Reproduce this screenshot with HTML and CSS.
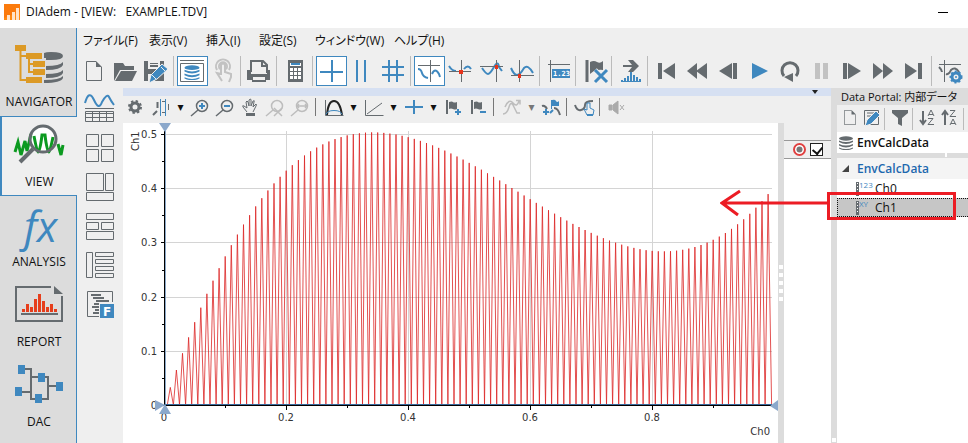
FILE: index.html
```html
<!DOCTYPE html>
<html lang="ja">
<head>
<meta charset="utf-8">
<title>DIAdem - [VIEW: EXAMPLE.TDV]</title>
<link rel="stylesheet" href="styles.css">
</head>
<body>
<svg class="defs" aria-hidden="true">
  <symbol id="page" viewBox="0 0 16 20"><path class="g" d="M10 .5H.5v19h15V6"/><path class="gf" d="M10 0v6h6z"/></symbol>
  <symbol id="lens" viewBox="0 0 25 27"><circle cx="14" cy="10" r="5.500"/><path d="M10 14l-7 6"/></symbol>
  <symbol id="flag" viewBox="0 0 25 27"><path class="g2" d="M6 4v14"/><path class="gf" d="M8 6q3-1 4 0t4 0v7q-2 1-4 0t-4 0z"/></symbol>
  <symbol id="db" viewBox="0 0 14 14"><ellipse cx="7" cy="2.500" rx="7" ry="2.200"/><path d="M0 4.500q7 3 14 0v1.500q-7 4-14 0zM0 8q7 3 14 0v1.500q-7 4-14 0zM0 11.500q7 3 14 0v1q-7 3.500-14 0z"/></symbol>
</svg>
<header class="title">
  <svg width="16" height="16" aria-hidden="true"><rect width="16" height="16" fill="#ff8a12"/><path d="M0 0h16v8L0 14z" fill="#fb7a0c"/><path d="M3 11h3v5H3zM8 8h3v8H8zM12 4h3v12h-3z" fill="#ffe3c8"/></svg>
  <h1>DIAdem - [VIEW: &nbsp; EXAMPLE.TDV]</h1>
  <button class="minimize" aria-label="最小化"></button>
</header>
<div class="app">
  <nav class="modules">
    <a href="#navigator" class="module">
      <svg width="76" height="56"><g fill="#dc9a26"><path d="M15 9h11v6H15zM26 17h16v6H26zM33 25h12v6H33zM33 33h12v6H33zM26 41h16v6H26z"/></g><path d="M20.500 14v30H27M20 20h7M29 22v14h5M29 28h5" fill="none" stroke="#dc9a26" stroke-width="2"/><path d="M44 17q2-1 7-1 12 0 12 4t-12 4h-5v-2h-2z" fill="#656b6f"/><path d="M46 30q14 0 17-4v3q-2 5-17 5zM46 38q14 0 17-4v3q-2 5-17 5zM44 44q16 0 19-4v2q-2 5-19 5z" fill="#656b6f"/></svg>
      <span>NAVIGATOR</span></a>
    <a href="#view" class="module active">
      <svg width="76" height="56"><circle cx="43" cy="23" r="13" fill="#fff"/><path d="M15 36l3-10 3 13 4-14 2 10 4-17M34 20q3 16 4 16 2 0 4-17h3q2 17 4 17 1 0 4-15M58 28l3 11 2-10" fill="none" stroke="#0c9a20" stroke-width="3"/><circle cx="43" cy="23" r="13" fill="none" stroke="#656b6f" stroke-width="3"/><path d="M33 33L20 46" stroke="#656b6f" stroke-width="4"/></svg>
      <span>VIEW</span></a>
    <a href="#analysis" class="module">
      <svg width="76" height="56"><text x="24" y="46" class="fx">fx</text></svg>
      <span>ANALYSIS</span></a>
    <a href="#report" class="module">
      <svg width="76" height="56"><path d="M51 11H16v34h46V20" fill="none" stroke="#656b6f" stroke-width="2"/><path d="M54 10l9 8h-9z" fill="#656b6f"/><path d="M21 38h37" stroke="#656b6f" stroke-width="2" fill="none"/><path d="M22 33h3v3h-3zM26 28h3v8h-3zM30 31h3v5h-3zM34 23h3v13h-3zM38 18h3v18h-3zM42 25h3v11h-3zM46 31h3v5h-3zM50 28h3v8h-3zM54 33h3v3h-3z" fill="#e63e1c"/></svg>
      <span>REPORT</span></a>
    <a href="#dac" class="module">
      <svg width="76" height="56"><path d="M24 13h7v30h5M20 36h11M31 21h17v22h-7M48 30h9" fill="none" stroke="#656b6f" stroke-width="2"/><path d="M18 9h7v9h-7zM38 17h7v9h-7zM56 26h7v9h-7zM15 31h7v9h-7zM35 38h7v9h-7z" fill="#3f88bf"/></svg>
      <span>DAC</span></a>
  </nav>
  <div class="main">
    <nav class="menu">
      <button>ファイル(F)</button><button>表示(V)</button><button>挿入(I)</button><button>設定(S)</button><button>ウィンドウ(W)</button><button>ヘルプ(H)</button>
    </nav>
    <div class="toolbar" role="toolbar">
      <button aria-label="新規"><svg><use href="#page" x="7" y="5" width="16" height="20"/></svg></button>
      <button aria-label="開く"><svg><path class="gf" d="M4 7h9l2 3h9v4H10L4 25z"/><path class="gf" d="M11 15h16l-5 10H5z"/></svg></button>
      <button aria-label="保存"><svg><path class="gf" d="M3 5h20v20H3z"/><path d="M7 5h12v8H7z" fill="#efefef"/><path class="gf" d="M9 7h8v1H9zM9 9h8v2H9z"/><path d="M7 18h7v7H7z" fill="#efefef"/><path d="M21 8l6 5-11 10-8 4 2-8z" fill="#3f88bf" stroke="#efefef"/><path d="M20 11l4 4M11 19l4 4" stroke="#efefef"/></svg></button>
      <i class="sep"></i>
      <button class="on" aria-label="データポータル"><svg><path class="g" d="M3 4.500h24M3.500 7.500h23v18h-23z"/><use href="#db" x="7" y="9" width="16" height="15" fill="#3f88bf"/></svg></button>
      <button aria-label="タッチ" disabled><svg><path d="M9 14a7 7 0 1 1 12 0M12 13a4 4 0 1 1 6 0M13 19V9q2-3 4 0v7l6 2v3l-2 5M13 18l-4-1 5 8" fill="none" stroke="#c2c2c2" stroke-width="2"/></svg></button>
      <i class="sep"></i>
      <button aria-label="印刷"><svg><path class="g2" d="M7 16V5h12l4 4v8M18 5v5h5"/><path class="gf" d="M3 14h4v4h16v-4h3v10h-4v2H8v-2H3z"/><path d="M9 21h12v3H9z" fill="#efefef"/></svg></button>
      <i class="sep"></i>
      <button aria-label="電卓"><svg><path class="gf" d="M8 4h15v22H8z"/><path d="M10 7h11v3H10zM10 12h3v3h-3zM14 12h3v3h-3zM18 12h3v3h-3zM10 16h3v3h-3zM14 16h3v3h-3zM18 16h3v3h-3zM10 20h3v3h-3zM14 20h3v3h-3zM18 20h3v3h-3z" fill="#fff"/><path d="M11 7h9v2h-9z" fill="#3f88bf"/></svg></button>
      <i class="sep"></i>
      <button class="on" aria-label="十字カーソル"><svg><path class="b2" d="M16 4v22M4 16h23"/></svg></button>
      <button aria-label="帯カーソル"><svg><path class="b2" d="M10 4v22M18 4v22"/></svg></button>
      <button aria-label="枠カーソル"><svg><path class="b2" d="M11 4v22M19 4v22M4 11h22M4 19h22"/></svg></button>
      <i class="sep"></i>
      <button class="on" aria-label="フリー"><svg><path class="b2" d="M4 13q3 0 4 4t6 5M18 18q3-7 7 0l1 3"/><path class="g" d="M16.500 4v22M4 9.500h22"/></svg></button>
      <button aria-label="曲線"><svg><path class="b2" d="M4 10q3 5 7 5M19 13q4-5 7 0"/><path class="g" d="M16.500 4v22M4 15.500h22"/><path class="r" d="M14 14h4v4h-4z"/></svg></button>
      <button aria-label="ピーク"><svg><path class="b2" d="M6 12q4 6 6 6t6-7 5 0l3 4"/><path class="g" d="M20.500 4v22M4 10.500h23"/><path class="r" d="M19 9h3v4h-3z"/></svg></button>
      <button aria-label="谷"><svg><path class="b2" d="M4 12q3 7 6 7t7-7q4-4 9 5"/><path class="g" d="M12.500 4v22M4 19.500h23"/><path class="r" d="M11 18h3v4h-3z"/></svg></button>
      <i class="sep"></i>
      <button aria-label="座標"><svg><path class="g" d="M7.500 4v22M5 8.500h22"/><path d="M9 13h18v9H9z" fill="#3f88bf"/><text x="10" y="20" class="digits">1.23</text></svg></button>
      <i class="sep"></i>
      <button aria-label="フラグ削除"><svg><path d="M8 4v22" stroke="#656b6f" stroke-width="3"/><path class="gf" d="M11 6q4-2 7 0t6-1v9q-7-1-13 4z"/><path d="M16 14l12 12M28 14L16 26" stroke="#efefef" stroke-width="5"/><path d="M16 14l12 12M28 14L16 26" stroke="#3f88bf" stroke-width="3"/></svg></button>
      <i class="sep"></i>
      <button aria-label="転送"><svg><path class="gf" d="M8 9h9l-4-5h5l6 6-6 6h-5l4-5H8z"/><path d="M7 24v2M10 22v4M13 20v6M16 16v10M19 19v7M22 21v5M25 23v3" class="b2"/><path d="M6 25.500h20" stroke="#3f88bf"/></svg></button>
      <i class="sep"></i>
      <button aria-label="先頭"><svg><path class="gf" d="M7 7h4v16H7zM24 7v16l-12-8z"/></svg></button>
      <button aria-label="早戻し"><svg><path class="gf" d="M15 7v16L5 15zM25 7v16l-11-8z"/></svg></button>
      <button aria-label="コマ戻し"><svg><path class="gf" d="M19 7v16L6 15zM20 7h4v16h-4z"/></svg></button>
      <button aria-label="再生"><svg><path d="M8 7l16 8-16 8z" fill="#3f88bf"/></svg></button>
      <button aria-label="繰り返し"><svg><path d="M9 20a8 8 0 1 1 12 0" fill="none" stroke="#656b6f" stroke-width="3"/><path class="gf" d="M9 21l9-4v9z"/></svg></button>
      <button aria-label="一時停止" disabled><svg><path d="M9 7h5v16H9zM17 7h5v16h-5z" fill="#c2c2c2"/></svg></button>
      <button aria-label="コマ送り"><svg><path class="gf" d="M6 7h4v16H6zM11 7l13 8-13 8z"/></svg></button>
      <button aria-label="早送り"><svg><path class="gf" d="M5 7l10 8-10 8zM15 7l10 8-10 8z"/></svg></button>
      <button aria-label="末尾"><svg><path class="gf" d="M6 7l12 8-12 8zM19 7h4v16h-4z"/></svg></button>
      <i class="sep"></i>
      <button aria-label="設定"><svg><path class="g" d="M9.500 4v22M4 8.500h22"/><path class="g2" d="M4 11q3 3 3 5M11 18q3 1 5-4 4-4 8 2"/><circle cx="21" cy="21" r="4" fill="#efefef" stroke="#3f88bf" stroke-width="3"/><circle cx="21" cy="21" r="5.500" fill="none" stroke="#3f88bf" stroke-width="2" stroke-dasharray="2 2"/><circle cx="21" cy="21" r="1" fill="#3f88bf"/></svg></button>
    </div>
    <div class="workspace">
      <div class="layouts">
        <button aria-label="曲線と表"><svg><path class="g" d="M1 15.500h29"/><path class="b2" d="M1 10q4-14 9-3t8 2q5-9 7-5t5 8"/><path class="g" d="M1.500 18.500h28v10h-28zM1 20.500h28M1 24.500h28M8.500 19v10M15.500 19v10M22.500 19v10"/></svg></button>
        <button aria-label="4分割"><svg><path class="g" d="M2.500 2.500h12v12h-12zM17.500 2.500h12v12h-12zM2.500 17.500h12v12h-12zM17.500 17.500h12v12h-12z"/></svg></button>
        <button aria-label="3分割"><svg><path class="g" d="M2.500 2.500h17v17h-17zM21.500 2.500h8v17h-8zM2.500 21.500h27v8h-27z"/></svg></button>
        <button aria-label="段組み"><svg><path class="g" d="M2.500 3.500h27v6h-27zM2.500 12.500h12v7h-12zM17.500 12.500h12v7h-12zM2.500 21.500h27v8h-27z"/></svg></button>
        <button aria-label="左列"><svg><path class="g" d="M2.500 3.500h6v25h-6zM11.500 3.500h18v4h-18zM11.500 10.500h18v4h-18zM11.500 17.500h18v4h-18zM11.500 24.500h18v4h-18z"/></svg></button>
        <button aria-label="フォーム"><svg><path class="g" d="M28.500 14V3.500h-25v25H15"/><path class="g2" d="M7 7h10M9 10h11M12 13h13M10 16h5M8 19h7M11 22h4M9 25h6"/><path d="M16 16h14v14H16z" fill="#3f88bf"/><text x="19" y="28" class="letter">F</text></svg></button>
      </div>
      <main class="document">
        <div class="doctitle"><svg width="6" height="4" aria-hidden="true"><path d="M0 0h6L3 4z" fill="#222"/></svg></div>
        <div class="tools" role="toolbar">
          <button aria-label="設定"><svg><circle cx="12" cy="11" r="4" fill="none" stroke="#656b6f" stroke-width="3"/><circle cx="12" cy="11" r="6" fill="none" stroke="#656b6f" stroke-width="2" stroke-dasharray="2.400 2.300"/></svg></button>
          <button aria-label="ズーム枠"><svg><path class="g2" d="M5 19l4-4M9.500 12V6"/><path class="b" d="M12.500 3v17M17.500 3v17"/><path d="M14 5.500h3M14 16.500h3M20.500 8v6" class="g"/></svg></button><button class="arrow" aria-label="選択肢">▾</button>
          <button aria-label="拡大"><svg class="g thin"><use href="#lens" width="25" height="27"/><path class="b2" d="M14 7v6M11 10h6"/></svg></button>
          <button aria-label="縮小"><svg class="g thin"><use href="#lens" width="25" height="27"/><path class="b2" d="M11 10h6"/></svg></button>
          <button aria-label="移動"><svg><path class="g" d="M9 16l-4-5q-1-2 1-1l3 2-1-6q1-2 2 0l1 4V4q2-2 2 0v6l2-5q2-1 1 1l-1 5 3-3q1 0 0 2l-3 6"/><path class="gf" d="M8 17h9v3H8z"/></svg></button>
          <button aria-label="ズーム解除" disabled><svg class="l"><use href="#lens" width="25" height="27"/><path d="M11 12l8 8M19 12l-8 8"/></svg></button>
          <button aria-label="前のズーム" disabled><svg class="l"><use href="#lens" width="25" height="27"/><path d="M9 10h10M11 8l-2 2 2 2M17 8l2 2-2 2"/></svg></button>
          <i class="sep"></i>
          <button aria-label="曲線"><svg><path class="g" d="M4.500 4v15.500h18"/><path d="M6 19q1-14 7-14t8 14" fill="none" stroke="#222" stroke-width="2"/><path class="b" d="M5 18.500q1-4 8-4t8 4"/></svg></button><button class="arrow" aria-label="選択肢">▾</button>
          <button aria-label="軸"><svg><path class="g" d="M4.500 4v15.500h18M6 18L21 7"/></svg></button><button class="arrow" aria-label="選択肢">▾</button>
          <button aria-label="カーソル"><svg><path class="b2" d="M13 4v14M4 11h18"/></svg></button><button class="arrow" aria-label="選択肢">▾</button>
          <button aria-label="フラグ追加"><svg><use href="#flag" width="25" height="27"/><path class="b2" d="M17 13v6M14 16h6"/></svg></button>
          <button aria-label="フラグ削除"><svg><use href="#flag" width="25" height="27"/><path class="b2" d="M14 16h6"/></svg></button>
          <i class="sep"></i>
          <button aria-label="曲線操作" disabled><svg class="l"><path d="M4 18q4 0 6-7t5 0l3 6h3M6 11q4-9 8-4t6-2M17 4.500h4v4"/></svg></button><button class="arrow dim" aria-label="選択肢">▾</button>
          <button aria-label="データ点"><svg><path d="M12.500 4v9" class="b"/><path d="M13 4q3-1 4 1t3 0v5h-7z" fill="#3f88bf"/><path class="g2" d="M3 10q3-1 5 3M15 12q4 0 6 7"/><path class="b2" d="M7 13v6M4 16h6M11 17l3-3"/></svg></button>
          <i class="sep"></i>
          <button aria-label="選択"><svg><path class="g2" d="M3 9q2 6 6 5t4-5 8-4"/><path d="M14 17l-2-4 3 1V7h3v5l4 2-1 5h-6z" fill="#efefef" stroke="#3f88bf"/><path class="b2" d="M15 19h6"/></svg></button>
          <i class="sep"></i>
          <button aria-label="音声" disabled><svg><path d="M4 9h3v5H4zM8 9l5-4v13l-5-4zM15 9l4 5M19 9l-4 5" fill="#aaa" stroke="#aaa"/></svg></button>
        </div>
        <div class="panes">
          <section class="plot">
            <svg class="chart" viewBox="0 0 655 320" role="img" aria-label="Ch1 / Ch0">
              <path d="M163.500 8v274M285.500 8v274M407.500 8v274M529.500 8v274M42 11.500h607M42 65.500h607M42 119.500h607M42 174.500h607M42 228.500h607" stroke="#d4d4d4" fill="none"/>
              <path id="signal" fill="none" stroke="#dc2424" stroke-width="0.800"/>
              <path d="M41.500 8v275" stroke="#000"/><path d="M42.500 8v273" stroke="#8aa8c8"/>
              <path d="M41 282.500h608" stroke="#000"/><path d="M42 281.500h607" stroke="#38689a"/>
              <path d="M38 11.500h4M38 65.500h4M38 119.500h4M38 174.500h4M38 228.500h4M38 282.500h4M39 38.500h3M39 92.500h3M39 147.500h3M39 201.500h3M39 255.500h3M41.500 283v4M163.500 283v4M285.500 283v4M407.500 283v4M529.500 283v4M102.500 283v2M224.500 283v2M346.500 283v2M468.500 283v2M590.500 283v2" stroke="#000"/>
              <g class="ticks">
                <g text-anchor="end"><text x="34" y="15">0.5</text><text x="34" y="69">0.4</text><text x="34" y="123">0.3</text><text x="34" y="178">0.2</text><text x="34" y="232">0.1</text><text x="34" y="286">0</text></g>
                <g text-anchor="middle"><text x="41" y="298">0</text><text x="163" y="298">0.2</text><text x="285" y="298">0.4</text><text x="407" y="298">0.6</text><text x="529" y="298">0.8</text></g>
                <text x="647" y="312" text-anchor="end">Ch0</text>
                <text transform="translate(16 28) rotate(-90)">Ch1</text>
              </g>
              <path d="M36 0h12l-6 9zM32 277v11l10-6zM36 291h12l-6-10zM655 277v11l-8-5z" fill="#8ba8cb"/>
            </svg>
          </section>
          <div class="splitter grip"><i></i><i></i><i></i><i></i><i></i></div>
          <aside class="legend">
            <label class="entry"><svg width="13" height="13"><circle cx="6.500" cy="6.500" r="5.500" fill="#fff" stroke="#e04040" stroke-width="2"/><circle cx="6.500" cy="6.500" r="3" fill="#777"/></svg><input type="checkbox" checked aria-label="Ch1"></label>
          </aside>
        </div>
      </main>
      <div class="splitter end"><i></i></div>
      <aside class="portal">
        <h2>Data Portal: 内部データ</h2>
        <div class="portaltools">
          <button aria-label="新規"><svg><use href="#page" x="7" y="5" width="12" height="15"/></svg></button>
          <button aria-label="保存"><svg><path class="g" d="M4.500 5.500h14v14h-14zM7 8h9M7 11h9"/><path d="M16 6l4 4-9 9-6 2 2-6z" fill="#3f88bf" stroke="#efefef"/></svg></button>
          <i class="sep"></i>
          <button aria-label="フィルタ"><svg><path class="gf" d="M4 5h16v3l-6 5v8l-4-2v-6L4 8z"/></svg></button>
          <i class="sep"></i>
          <button aria-label="昇順"><svg><path class="g2" d="M7 6v12M4 15l3 4 3-4"/><path class="g" d="M12 11l3-6 3 6M13 9.500h4M12 13.500h5l-5 6h6"/></svg></button>
          <button aria-label="降順"><svg><path class="g2" d="M6 7v13M3 10l3-4 3 4"/><path class="g" d="M11 5.500h5l-5 6h6M11 20l3-6 3 6M12 18.500h4"/></svg></button>
          <i class="sep"></i>
        </div>
        <div class="source"><svg width="14" height="14"><use href="#db" width="14" height="14" fill="#656b6f"/></svg>EnvCalcData</div>
        <div class="divider"><i></i></div>
        <div class="group"><svg width="7" height="7"><path d="M7 0v7H0z" fill="#444"/></svg>EnvCalcData</div>
        <ul class="channels">
          <li><svg><path d="M1.500 2v14" stroke="#656b6f" stroke-width="3"/><path d="M1.500 3v12" stroke="#fff" stroke-dasharray="1 2"/><text x="3" y="8">123</text></svg>Ch0</li>
          <li class="selected"><svg><path d="M1.500 2v14" stroke="#656b6f" stroke-width="3"/><path d="M1.500 3v12" stroke="#fff" stroke-dasharray="1 2"/><text x="3" y="8">XY</text></svg>Ch1
            <svg class="callout" width="240" height="34" aria-hidden="true"><path d="M108.500 4.500h126v25h-126zM109 14H2M20 2L2 14l16 12"/></svg></li>
        </ul>
      </aside>
    </div>
  </div>
</div>
<script src="chart.js"></script>
</body>
</html>
```
FILE: styles.css
```css
* { box-sizing: border-box; }
html, body { height: 100%; margin: 0; }
body {
  display: flex; flex-direction: column; overflow: hidden;
  background: #efefef; color: #111;
  font: 12px/16px "Open Sans", "Noto Sans CJK JP", sans-serif;
}
button { appearance: none; border: 0; margin: 0; padding: 0; background: none; color: inherit; font: inherit; }
svg { display: block; flex: none; }
.defs { position: absolute; width: 0; height: 0; }
h1, h2 { margin: 0; font-weight: 400; }
.g, .g2, .b, .b2, .l { fill: none; stroke: #656b6f; }
.g2, .b2 { stroke-width: 2; }
.b, .b2 { stroke: #3f88bf; }
.l { stroke: #bdbdbd; stroke-width: 1.5; }
.thin { stroke-width: 1.5; }
.gf { fill: #656b6f; stroke: none; }
.r { fill: #e8341c; }

.title { display: flex; flex: none; align-items: center; height: 28px; padding: 0 20px 4px 4px; background: #fff; }
.title h1 { flex: 1; margin-left: 6px; font-size: 12px; line-height: 16px; }
.minimize { width: 10px; height: 1px; background: #000; }

.app { display: flex; flex: 1; min-height: 0; }
.modules { flex: none; width: 77px; background: #dcdcdc; border-right: 1px solid #3f88bf; }
.module { display: block; height: 80px; color: #111; text-align: center; text-decoration: none; line-height: 20px; }
.module:first-child { height: 88px; padding-top: 8px; }
.module span { display: block; padding-left: 2px; }
.module.active { margin-right: -1px; background: #efefef; box-shadow: inset 2px 0 #3f88bf, inset 0 1px #3f88bf, inset 0 -1px #3f88bf; }
.fx { font: italic 42px "Open Sans", sans-serif; fill: #3f88bf; }
.module svg { overflow: visible; }

.main { display: flex; flex: 1; flex-direction: column; min-width: 0; }
.menu { display: grid; grid-template-columns: 66px 57px 53px 56px 79px auto; justify-content: start; align-items: center; height: 26px; padding-left: 6px; }
.menu button { text-align: left; white-space: nowrap; font-feature-settings: "palt"; }
.toolbar { display: flex; align-items: center; height: 34px; padding: 0 2px; }
.toolbar button, .toolbar svg { width: 31px; height: 30px; flex: none; }
.toolbar .on { background: #fff; box-shadow: inset 0 0 0 1px #3f88bf; }
.sep { flex: none; width: 5px; height: 30px; background: linear-gradient(#bbb, #bbb) 1px 0 / 1px 100% no-repeat; }
.digits { font: bold 7px "DejaVu Sans Mono", monospace; fill: #fff; }
.letter { font: bold 12px "DejaVu Sans", sans-serif; fill: #fff; }

.workspace { display: flex; flex: 1; min-height: 0; }
.layouts { flex: none; width: 46px; padding-top: 5px; }
.layouts button, .layouts svg { display: block; width: 32px; height: 32px; }
.layouts button { margin: 0 0 7px 7px; }

.document { display: flex; flex: 1; flex-direction: column; min-width: 0; }
.doctitle { display: flex; justify-content: flex-end; height: 8px; padding: 2px 13px 0 0; background: #d6e0f2; }
.tools { display: flex; height: 27px; }
.tools button, .tools svg { flex: none; width: 25px; height: 27px; }
.tools .arrow { width: 15px; height: 22px; font: 12px/22px "DejaVu Sans", sans-serif; text-align: center; }
.tools .dim { color: #777; }
.tools .sep { width: 8px; height: 18px; margin-top: 2px; background-image: linear-gradient(#777, #777); background-position-x: 2px; }
.panes { display: flex; flex: 1; min-height: 0; }
.plot { flex: 1; min-width: 0; background: #fff; }
.chart { width: 100%; height: auto; }
.ticks { font: 10px "DejaVu Sans", sans-serif; fill: #333; }
.splitter { display: flex; flex: none; flex-direction: column; align-items: center; justify-content: center; gap: 4px; width: 6px; background: #dcdcdc; }
.splitter i { width: 4px; height: 4px; background: #fff; }
.splitter.end { justify-content: flex-end; padding-bottom: 1px; }
.legend { flex: none; width: 47px; padding-top: 17px; background: linear-gradient(#efefef 36px, #fff 36px); }
.entry { display: flex; align-items: center; gap: 4px; height: 19px; padding-left: 9px; border: solid #999; border-width: 1px 0; }
.entry input { position: relative; appearance: none; width: 13px; height: 13px; margin: 0; border: 1px solid #222; background: #fff; }
.entry input:checked::after { content: ""; position: absolute; left: 3px; top: 1px; width: 5px; height: 7px; border: solid #111; border-width: 0 2px 2px 0; transform: rotate(40deg); }

.portal { display: flex; flex: none; flex-direction: column; width: 131px; background: #fff; }
.portal h2 { height: 17px; padding-left: 4px; background: #dcdcdc; font-size: 11px; line-height: 17px; white-space: nowrap; font-feature-settings: "palt"; }
.portaltools { display: flex; height: 27px; background: #efefef; }
.portaltools button, .portaltools svg { flex: none; width: 23px; height: 27px; }
.portaltools .sep { height: 22px; margin-top: 3px; }
.source, .group { display: flex; flex: none; align-items: center; height: 21px; padding-left: 2px; }
.source { gap: 4px; font-weight: 600; }
.divider { display: flex; justify-content: flex-end; height: 5px; padding-right: 21px; background: #dcdcdc; }
.divider i { width: 2px; height: 4px; background: #fff; }
.group { gap: 8px; padding-left: 5px; color: #1d68ae; background: #f4f4f4; font-weight: 600; }
.channels { margin: 0; padding: 0; list-style: none; }
.channels li { position: relative; display: flex; align-items: center; gap: 1px; height: 19px; padding-left: 18px; border: 1px dotted transparent; border-right: 0; }
.channels li > svg:first-child { width: 18px; height: 18px; overflow: visible; }
.channels text { font: 8px "Open Sans", sans-serif; fill: #3f88bf; }
.channels .selected { background: #c6c6c6; border-color: #111; }
.channels .callout { position: absolute; right: 8px; top: -10px; fill: none; stroke: #ec1c24; stroke-width: 3; }
```
FILE: chart.js
```javascript
// Oscillating signal: one spike per 0.01 on the x axis, under a cubic envelope.
const envelope = x => x * (3.419 - 7.08 * x + 4.065 * x * x);
const points = [];
for (let k = 1; k <= 99; k++) {
  const x = 41.2 + 6.1 * k;
  points.push(`${(x - 3).toFixed(1)} 282`, `${x.toFixed(1)} ${(282.5 - 542 * envelope(k / 100)).toFixed(1)}`);
}
points.push("648.6 282");
document.getElementById("signal").setAttribute("d", "M" + points.join("L"));
```
